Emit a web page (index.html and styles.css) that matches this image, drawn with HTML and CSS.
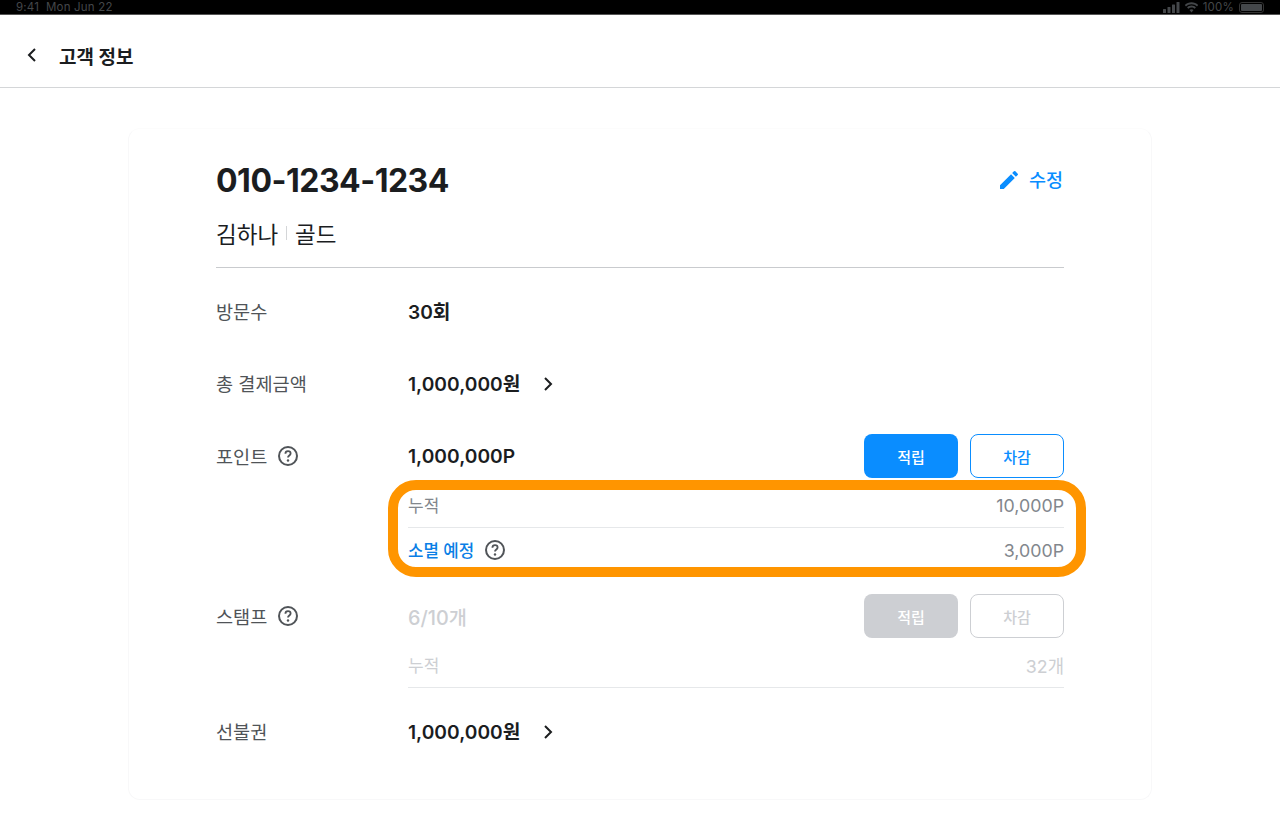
FILE: index.html
```html
<!DOCTYPE html>
<html lang="ko">
<head>
    <meta charset="UTF-8">
    <meta name="viewport" content="width=device-width, initial-scale=1.0">
    <title>고객 정보</title>
    <link rel="stylesheet" href="styles.css">
</head>
<body>
    <div class="status-bar">
        <span class="status-time">9:41&nbsp; Mon Jun 22</span>
        <div class="status-right">
            <svg width="17" height="11" viewBox="0 0 17 11"><rect x="0" y="7" width="3" height="4" rx="0.5"/><rect x="4.5" y="5" width="3" height="6" rx="0.5"/><rect x="9" y="2.5" width="3" height="8.5" rx="0.5"/><rect x="13.5" y="0" width="3" height="11" rx="0.5"/></svg>
            <svg width="15" height="11" viewBox="0 0 15 11"><path d="M7.5 2.2c2.1 0 4 .8 5.500 2.200l1.200-1.300C12.400 1.300 10 .3 7.500.3S2.600 1.300.8 3.100L2 4.400c1.500-1.400 3.400-2.200 5.500-2.200z"/><path d="M7.500 5.400c1.200 0 2.300.5 3.200 1.300l1.200-1.300c-1.200-1.100-2.700-1.800-4.400-1.800s-3.200.7-4.400 1.800l1.200 1.300c.9-.8 2-1.300 3.200-1.300z"/><path d="M7.500 7.200c-.8 0-1.500.3-2 .8l2 2.500 2-2.500c-.5-.5-1.200-.8-2-.8z"/></svg>
            <span>100%</span>
            <span class="battery"><span class="battery-fill"></span></span>
        </div>
    </div>

    <header class="top-bar">
        <svg class="back-icon" width="24" height="24" viewBox="0 0 24 24"><path d="M15 6l-6 6 6 6" fill="none" stroke="#1b1d1f" stroke-width="2"/></svg>
        <h1>고객 정보</h1>
    </header>

    <main class="card">
        <div class="title-row">
            <h2>010-1234-1234</h2>
            <a class="edit-link">
                <svg class="edit-icon" width="24" height="24" viewBox="0 0 24 24"><path fill="#0a8dff" d="M3 17.250V21h3.750L17.810 9.940l-3.750-3.750L3 17.250zM20.710 7.040a1 1 0 0 0 0-1.410l-2.340-2.340a1 1 0 0 0-1.410 0l-1.830 1.830 3.750 3.750 1.830-1.830z"/></svg>
                수정
            </a>
        </div>
        <div class="name-row">김하나<span class="name-sep"></span>골드</div>

        <div class="row first-row">
            <div class="label plain">방문수</div>
            <div class="value won">30회</div>
        </div>

        <div class="row">
            <div class="label plain">총 결제금액</div>
            <div class="value won">1,000,000원 <svg class="chevron" width="24" height="24" viewBox="0 0 24 24"><path d="M9 6l6 6-6 6" fill="none" stroke="#1b1d1f" stroke-width="2"/></svg></div>
        </div>

        <div class="row">
            <div class="label">포인트 <svg class="help" width="24" height="24" viewBox="0 0 24 24"><use href="#help-icon"/></svg></div>
            <div class="value">1,000,000P</div>
            <div class="actions">
                <button class="btn btn-primary">적립</button>
                <button class="btn btn-outline">차감</button>
            </div>
        </div>
        <div class="sub-list">
            <div class="sub-row with-line">
                <span class="sub-name">누적</span>
                <span>10,000P</span>
            </div>
            <div class="sub-row">
                <span class="sub-link">소멸 예정 <svg class="help" width="24" height="24" viewBox="0 0 24 24"><use href="#help-icon"/></svg></span>
                <span>3,000P</span>
            </div>
            <div class="highlight"></div>
        </div>

        <div class="row stamp-row">
            <div class="label">스탬프 <svg class="help" width="24" height="24" viewBox="0 0 24 24"><use href="#help-icon"/></svg></div>
            <div class="value disabled">6/10개</div>
            <div class="actions">
                <button class="btn btn-primary-off">적립</button>
                <button class="btn btn-outline-off">차감</button>
            </div>
        </div>
        <div class="sub-list stamp-sub">
            <div class="sub-row with-line disabled">
                <span class="sub-name">누적</span>
                <span class="sub-count">32개</span>
            </div>
        </div>

        <div class="row stamp-row">
            <div class="label plain">선불권</div>
            <div class="value won">1,000,000원 <svg class="chevron" width="24" height="24" viewBox="0 0 24 24"><path d="M9 6l6 6-6 6" fill="none" stroke="#1b1d1f" stroke-width="2"/></svg></div>
        </div>
    </main>

    <svg class="icon-defs" width="0" height="0">
        <symbol id="help-icon" viewBox="0 0 24 24">
            <circle cx="12" cy="12" r="9" fill="none" stroke="#505458" stroke-width="2"/>
            <path d="M9.400 9.700c0-1.500 1.100-2.500 2.600-2.500s2.600 1 2.600 2.300c0 2-2.600 2-2.600 4" fill="none" stroke="#505458" stroke-width="1.800"/>
            <circle cx="12" cy="16.500" r="1.200" fill="#505458"/>
        </symbol>
    </svg>
</body>
</html>
```

FILE: styles.css
```css
* {
    box-sizing: border-box;
}
body {
    margin: 0;
    height: 824px;
    overflow: hidden;
    background: white;
    color: #1b1d1f;
    font-family: Inter, "Noto Sans CJK KR", sans-serif;
}
.status-bar {
    height: 15px;
    background: #000;
    border-bottom: 1px solid #555;
    padding: 0 16px;
    display: flex;
    justify-content: space-between;
    align-items: center;
    color: #44474a;
    font-size: 11.5px;
    letter-spacing: 0.2px;
}
.status-right {
    display: flex;
    align-items: center;
    gap: 4px;
    fill: #44474a;
}
.battery {
    width: 25px;
    height: 11px;
    margin-left: 1px;
    border: 1px solid #333;
    border-radius: 3px;
    padding: 1px;
    display: flex;
}
.battery-fill {
    flex: 1;
    background: #44474a;
    border-radius: 1px;
}
.top-bar {
    height: 73px;
    border-bottom: 1px solid #d4d6d8;
    padding: 8px 0 0 20px;
    display: flex;
    align-items: center;
    gap: 15px;
}
.top-bar h1 {
    margin: 0;
    font-size: 19px;
    font-weight: 700;
}
.card {
    width: 1024px;
    height: 672px;
    margin: 40px auto 0;
    padding: 0 87px;
    border: 1px solid #f8f8f9;
    border-top-color: #fcfcfc;
    border-radius: 12px;
}
.title-row {
    display: flex;
    justify-content: space-between;
    align-items: center;
    height: 44px;
    margin-top: 29px;
}
.title-row h2 {
    margin: 0;
    font-size: 32px;
    font-weight: 700;
    letter-spacing: -0.5px;
}
.edit-link {
    display: flex;
    align-items: center;
    gap: 8px;
    padding: 0 1px 2px 0;
    color: #0a8dff;
    font-size: 18.5px;
    font-weight: 500;
}
.edit-icon {
    margin-top: 2px;
}
.name-row {
    height: 66px;
    padding-bottom: 4px;
    display: flex;
    align-items: center;
    font-size: 22.5px;
    border-bottom: 1px solid #c9cbce;
}
.name-sep {
    width: 1px;
    height: 14px;
    margin: 0 8px;
    background: #d4d6d8;
}
.row {
    height: 44px;
    display: flex;
    align-items: center;
    margin-top: 28px;
}
.first-row {
    margin-top: 22px;
}
.stamp-row {
    margin-top: 22px;
}
.label {
    width: 192px;
    padding-bottom: 2px;
    display: flex;
    align-items: center;
    gap: 5px;
    color: #505458;
    font-size: 18.6px;
}
.label.plain {
    padding-bottom: 4px;
}
.label .help {
    margin-top: 2px;
}
.value {
    display: flex;
    align-items: center;
    gap: 16px;
    font-size: 19.2px;
    font-weight: 600;
}
.value.won {
    padding-bottom: 2px;
}
.chevron {
    margin-top: 2px;
}
.help {
    margin-left: 4px;
}
.actions {
    margin-left: auto;
    display: flex;
    gap: 12px;
}
.btn {
    width: 94px;
    height: 44px;
    border-radius: 8px;
    font-family: inherit;
    font-size: 15px;
    font-weight: 500;
    background: white;
    border: 1px solid transparent;
}
.btn-primary {
    background: #0a8dff;
    color: white;
}
.btn-outline {
    border-color: #0a8dff;
    color: #0a8dff;
}
.btn-primary-off {
    background: #cdcfd3;
    color: white;
}
.btn-outline-off {
    border-color: #cdcfd3;
    color: #cdcfd3;
}
.sub-list {
    position: relative;
    margin: 6px 0 0 192px;
}
.sub-row {
    height: 44px;
    display: flex;
    justify-content: space-between;
    align-items: center;
    color: #82878d;
    font-size: 17.8px;
}
.sub-name {
    font-size: 17px;
    padding-bottom: 2px;
}
.sub-count {
    padding-bottom: 2px;
}
.with-line {
    border-bottom: 1px solid #e6e8ea;
}
.sub-link {
    display: flex;
    align-items: center;
    gap: 5px;
    color: #0a7fe6;
    font-size: 16.8px;
    font-weight: 500;
}
.disabled {
    color: #cdcfd3;
}
.value.disabled {
    font-size: 19.8px;
    font-weight: 500;
}
.highlight {
    position: absolute;
    left: -20px;
    right: -22px;
    top: -4px;
    height: 97px;
    border: 10px solid #ff9500;
    border-radius: 28px;
}
.icon-defs {
    position: absolute;
}
```
